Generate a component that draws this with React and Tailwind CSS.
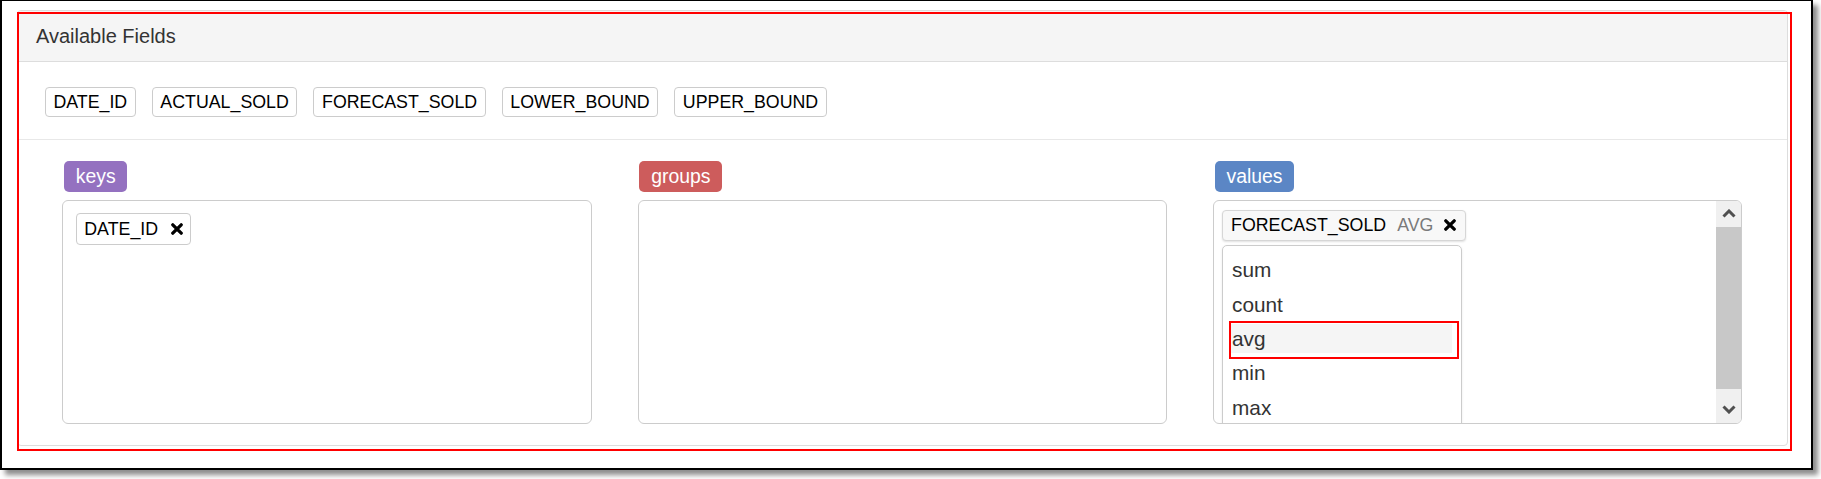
import React from 'react'

const FIELDS = ['DATE_ID', 'ACTUAL_SOLD', 'FORECAST_SOLD', 'LOWER_BOUND', 'UPPER_BOUND']
const AGGS = ['sum', 'count', 'avg', 'min', 'max']

// glyphicon-remove style heavy cross
function RemoveIcon() {
  return (
    <svg width="12" height="12" viewBox="0 0 12 12" className="shrink-0">
      <path d="M1.8 1.8 L10.2 10.2 M10.2 1.8 L1.8 10.2" stroke="#000" strokeWidth="3.3" strokeLinecap="round" />
    </svg>
  )
}

function Chevron({ up }) {
  return (
    <svg width="14" height="9" viewBox="0 0 14 9">
      <polyline
        points={up ? '1.5,7.5 7,2 12.5,7.5' : '1.5,1.5 7,7 12.5,1.5'}
        fill="none"
        stroke="#505050"
        strokeWidth="3"
      />
    </svg>
  )
}

function Label({ text, color }) {
  return (
    <div className="flex ml-[1.7px] mb-[7.7px]">
      <span className={`h-[31.3px] flex items-center px-[11.8px] rounded-[5px] text-white text-[19.4px] ${color}`}>
        {text}
      </span>
    </div>
  )
}

export default function App() {
  return (
    <div className="relative w-[1821px] h-[479px] bg-white font-['Liberation_Sans',Arial,sans-serif]">
      <div className="w-[1813px] h-[470px] border-2 border-t border-black bg-white shadow-[5px_5px_5px_rgba(0,0,0,0.45)]">
        {/* Panel */}
        <div className="ml-[15px] mt-[9px] w-[1771px] h-[436px] border border-[#dddddd] rounded-[4px] overflow-hidden">
          <div className="h-[51px] bg-[#f5f5f5] border-b border-[#dddddd] flex items-center pl-[18px] text-[20px] text-[#333333]">
            Available Fields
          </div>

          {/* Field chips */}
          <div className="flex gap-[16px] pl-[26.8px] pt-[24.7px]">
            {FIELDS.map((f) => (
              <div
                key={f}
                className="h-[30.6px] flex items-center px-[7.6px] border border-[#cccccc] rounded-[4px] text-[17.8px] text-black"
              >
                {f}
              </div>
            ))}
          </div>

          <div className="mt-[22px] h-px bg-[#e8e8e8]" />

          {/* Drop zones */}
          <div className="grid grid-cols-3 gap-[46px] pl-[44.3px] pr-[44.6px] pt-[20.7px]">
            <div>
              <Label text="keys" color="bg-[#9471c0]" />
              <div className="h-[224px] border border-[#cccccc] rounded-[6px] pl-[12.4px] pt-[12.3px]">
                <div className="inline-flex h-[31.4px] items-center pl-[7.6px] pr-[7.3px] border border-[#cccccc] rounded-[4px] text-[17.8px] text-black gap-[12.6px]">
                  DATE_ID
                  <RemoveIcon />
                </div>
              </div>
            </div>

            <div>
              <Label text="groups" color="bg-[#cd5c5c]" />
              <div className="h-[224px] border border-[#cccccc] rounded-[6px]" />
            </div>

            <div>
              <Label text="values" color="bg-[#5b86c5]" />
              <div className="h-[224px] border border-[#cccccc] rounded-[6px] overflow-hidden flex">
                <div className="flex-1 pl-[8.3px] pt-[9px] overflow-hidden">
                  <div className="inline-flex h-[31px] items-center pl-[7.7px] pr-[8.7px] border border-[#d6d6d6] rounded-[4px] bg-[#f8f8f8] shadow-[0_1px_2px_rgba(0,0,0,0.12)] text-[17.8px]">
                    <span className="text-black">FORECAST_SOLD</span>
                    <span className="ml-[11px] text-[#7a7a7a]">AVG</span>
                    <span className="ml-[11px]">
                      <RemoveIcon />
                    </span>
                  </div>

                  {/* Aggregation menu */}
                  <div className="mt-[4px] w-[239.4px] h-[200px] border border-[#cccccc] rounded-t-[5px] bg-white pt-[9.2px] shadow-[0_1px_3px_rgba(0,0,0,0.08)]">
                    {AGGS.map((a) => (
                      <div
                        key={a}
                        className={`relative ml-[7.7px] mr-[8.7px] h-[29.3px] mb-[5.1px] flex items-center pl-[1px] text-[20.8px] text-[#333333] ${a === 'avg' ? 'bg-[#f5f5f5]' : ''}`}
                      >
                        {a}
                        {a === 'avg' && (
                          <div className="absolute left-[-1.7px] top-[-3.3px] w-[229.3px] h-[38.3px] border-2 border-[#ff0000]" />
                        )}
                      </div>
                    ))}
                  </div>
                </div>

                {/* Scrollbar */}
                <div className="w-[25.7px] flex flex-col bg-[#f0f0f0]">
                  <div className="h-[26px] flex items-center justify-center">
                    <Chevron up />
                  </div>
                  <div className="h-[162.3px] bg-[#c8c8c8]" />
                  <div className="flex-1 flex items-end">
                    <div className="h-[26px] w-full flex items-center justify-center">
                      <Chevron />
                    </div>
                  </div>
                </div>
              </div>
            </div>
          </div>
        </div>
      </div>

      {/* Highlight annotation */}
      <div className="absolute left-[17px] top-[12px] w-[1775px] h-[439px] border-2 border-[#ff0000] pointer-events-none" />
    </div>
  )
}
